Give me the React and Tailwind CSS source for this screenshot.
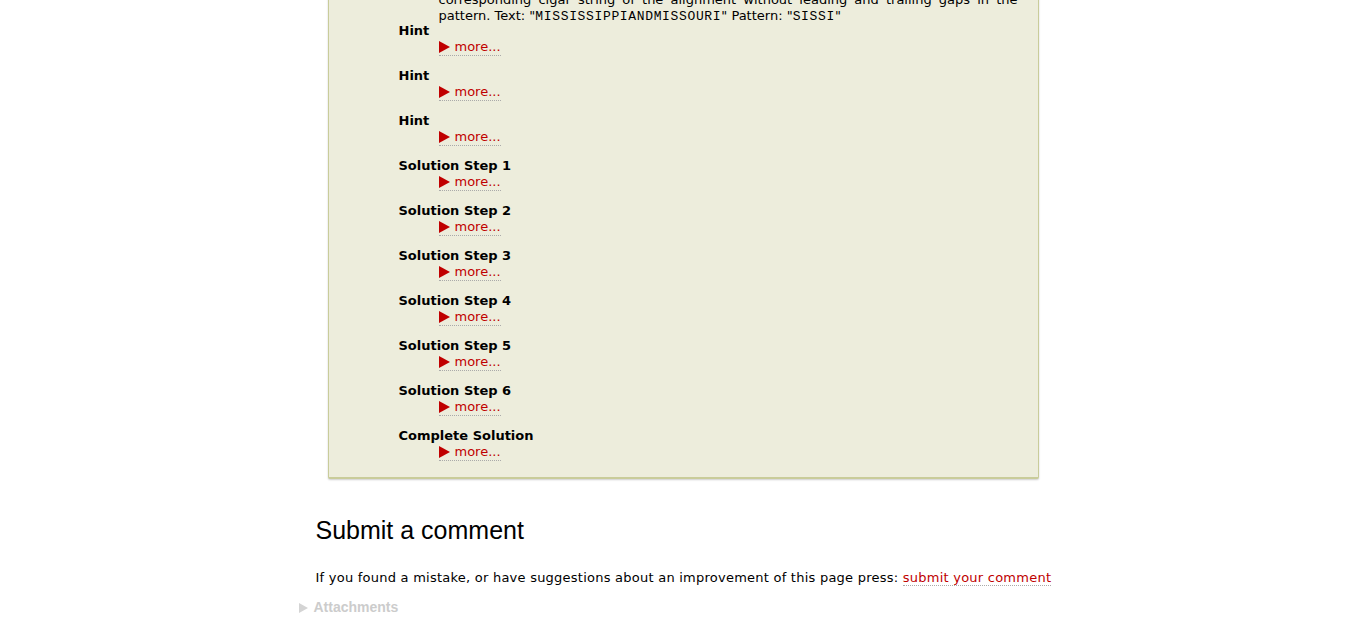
import React from "react";

const steps = [
  "Hint",
  "Hint",
  "Hint",
  "Solution Step 1",
  "Solution Step 2",
  "Solution Step 3",
  "Solution Step 4",
  "Solution Step 5",
  "Solution Step 6",
  "Complete Solution",
];

const mono = { fontFamily: '"Liberation Mono", "DejaVu Sans Mono", monospace' };

const Arrow = ({ color = "#c00000", className = "" }) => (
  <svg width="11" height="12" viewBox="0 0 11 12" className={className}>
    <polygon points="0,0 11,6 0,12" fill={color} />
  </svg>
);

const More = () => (
  <div className="pl-[40px] h-[16px] flex items-start">
    <span className="flex items-center h-[17px] gap-[5px] border-b border-dotted border-[#aaa] text-[#c00000] leading-[16px] cursor-pointer">
      <Arrow />
      <span>more...</span>
    </span>
  </div>
);

export default function App() {
  return (
    <div
      className="bg-white min-h-screen text-black"
      style={{ fontFamily: '"DejaVu Sans", Verdana, sans-serif' }}
    >
      <div className="w-[752px] mx-auto -mt-[21px]">
        {/* Exercise box */}
        <div className="ml-[29px] w-[711px] bg-[#ededdc] border border-[#c9cc9a] border-b-2 shadow-[0_1px_2px_rgba(0,0,0,0.2)] rounded-[2px] pt-[12px] pb-[17px] pl-[70px] pr-[20px] text-[13px] leading-[16px]">
          <p className="pl-[40px] text-justify">
            corresponding cigar string of the alignment without leading and
            trailing gaps in the pattern. Text: "
            <span className="text-[13px] tracking-[0.65px]" style={mono}>
              MISSISSIPPIANDMISSOURI
            </span>
            " Pattern: "
            <span className="text-[13px] tracking-[0.65px]" style={mono}>SISSI</span>"
          </p>
          <div className="flex flex-col gap-[13px] -mt-[2px]">
            {steps.map((s, i) => (
              <div key={i} className="h-[32px]">
                <div className="font-bold h-[16px] leading-[16px]">{s}</div>
                <More />
              </div>
            ))}
          </div>
        </div>

        {/* Comment section */}
        <div className="pl-[17px] mt-[36px]">
          <h2
            className="text-[25px] leading-[30px] font-normal"
            style={{ fontFamily: '"Liberation Sans", Arial, sans-serif' }}
          >
            Submit a comment
          </h2>
          <p className="mt-[25px] text-[13px] leading-[16px] tracking-[0.24px] whitespace-nowrap">
            If you found a mistake, or have suggestions about an improvement of
            this page press:{" "}
            <a className="text-[#c00000] border-b border-dotted border-[#aaa] cursor-pointer">
              submit your comment
            </a>
          </p>
        </div>
        <div
          className="flex items-center gap-[6px] mt-[11px] text-[14px] font-bold text-[#cccccc]"
          style={{ fontFamily: '"Liberation Sans", Arial, sans-serif' }}
        >
          <Arrow color="#d4d4d4" className="w-[9px] h-[10px]" />
          <span>Attachments</span>
        </div>
      </div>
    </div>
  );
}
